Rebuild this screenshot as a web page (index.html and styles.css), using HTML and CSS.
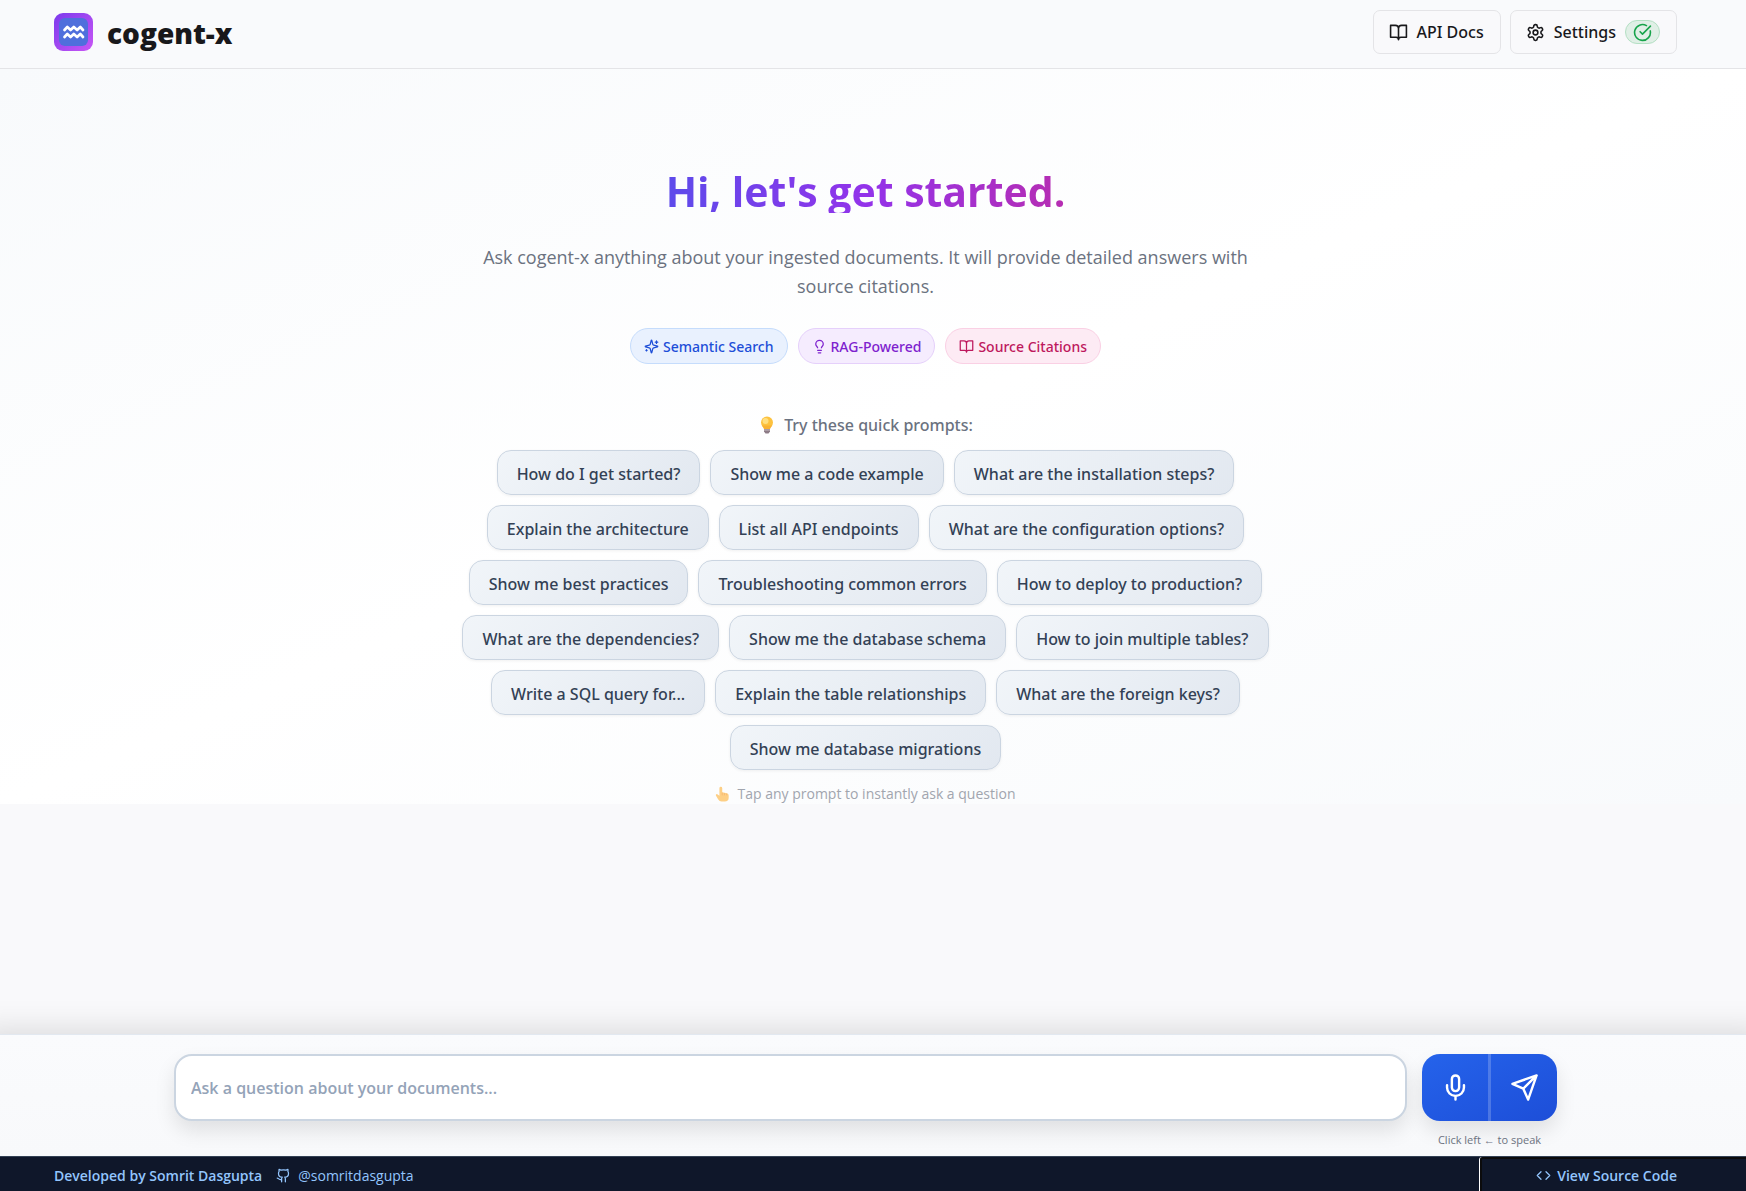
FILE: index.html
```html
<!DOCTYPE html>
<html lang="en">
<head>
<meta charset="utf-8">
<meta name="viewport" content="width=device-width, initial-scale=1">
<title>cogent-x</title>
<link rel="stylesheet" href="styles.css">
</head>
<body>
<svg class="sprite" aria-hidden="true">
  <symbol id="book" viewBox="0 0 24 24"><path d="M2 3h6a4 4 0 0 1 4 4v14a3 3 0 0 0-3-3H2zM22 3h-6a4 4 0 0 0-4 4v14a3 3 0 0 1 3-3h7z"/></symbol>
</svg>
<header class="header">
  <div class="brand">
    <svg class="logo" viewBox="0 0 39 38" aria-hidden="true">
      <defs><linearGradient id="logo-fill" x1="0" y1="0" x2="1" y2="1"><stop offset="0" stop-color="#7c3aed"/><stop offset="1" stop-color="#c956f5"/></linearGradient></defs>
      <rect width="39" height="38" rx="9" fill="url(#logo-fill)"/>
      <rect x="5" y="5" width="29" height="28" rx="6" fill="#4f6fdc"/>
      <path d="M10.500 17l2.800-3 3.300 3 3.200-3 3.300 3 3.200-3 2.700 3M10.500 24l2.800-3 3.300 3 3.200-3 3.300 3 3.200-3 2.700 3" fill="none" stroke="#fff" stroke-width="2.700" stroke-linecap="round" stroke-linejoin="round"/>
    </svg>
    <span class="brand-name">cogent-x</span>
  </div>
  <nav class="actions">
    <button class="action" type="button"><svg class="icon icon-md"><use href="#book"/></svg>API Docs</button>
    <button class="action" type="button">
      <svg class="icon icon-md" viewBox="0 0 24 24"><path d="M12.220 2h-.44a2 2 0 0 0-2 2v.18a2 2 0 0 1-1 1.730l-.43.25a2 2 0 0 1-2 0l-.15-.08a2 2 0 0 0-2.730.73l-.22.38a2 2 0 0 0 .73 2.730l.15.1a2 2 0 0 1 1 1.720v.51a2 2 0 0 1-1 1.740l-.15.09a2 2 0 0 0-.73 2.730l.22.38a2 2 0 0 0 2.730.73l.15-.08a2 2 0 0 1 2 0l.43.25a2 2 0 0 1 1 1.730V20a2 2 0 0 0 2 2h.44a2 2 0 0 0 2-2v-.18a2 2 0 0 1 1-1.730l.43-.25a2 2 0 0 1 2 0l.15.08a2 2 0 0 0 2.730-.73l.22-.39a2 2 0 0 0-.73-2.730l-.15-.08a2 2 0 0 1-1-1.740v-.5a2 2 0 0 1 1-1.740l.15-.09a2 2 0 0 0 .73-2.730l-.22-.38a2 2 0 0 0-2.730-.73l-.15.08a2 2 0 0 1-2 0l-.43-.25a2 2 0 0 1-1-1.730V4a2 2 0 0 0-2-2z"/><circle cx="12" cy="12" r="3"/></svg>Settings
      <span class="status"><svg class="icon icon-md" viewBox="0 0 24 24"><path d="M21.800 10A10 10 0 1 1 17 3.335M9 11l3 3L22 4"/></svg></span>
    </button>
  </nav>
</header>
<main class="main">
  <section class="hero">
    <div class="hero-inner">
      <h1 class="title">Hi, let's get started.</h1>
      <p class="lead">Ask cogent-x anything about your ingested documents. It will provide detailed answers with source citations.</p>
      <ul class="tags">
        <li class="tag tag-blue"><svg class="icon icon-sm" viewBox="0 0 24 24"><path d="M9.937 15.500A2 2 0 0 0 8.500 14.063l-6.135-1.582a.5.5 0 0 1 0-.962L8.500 9.936A2 2 0 0 0 9.937 8.500l1.582-6.135a.5.5 0 0 1 .963 0L14.063 8.500A2 2 0 0 0 15.500 9.937l6.135 1.581a.5.5 0 0 1 0 .964L15.500 14.063a2 2 0 0 0-1.437 1.437l-1.582 6.135a.5.5 0 0 1-.963 0zM20 3v4M22 5h-4M4 17v2M5 18H3"/></svg>Semantic Search</li>
        <li class="tag tag-purple"><svg class="icon icon-sm" viewBox="0 0 24 24"><path d="M15 14c.2-1 .7-1.700 1.500-2.500 1-.9 1.500-2.200 1.500-3.500A6 6 0 0 0 6 8c0 1 .2 2.200 1.500 3.500.7.7 1.300 1.500 1.500 2.500M9 18h6M10 22h4"/></svg>RAG-Powered</li>
        <li class="tag tag-pink"><svg class="icon icon-sm"><use href="#book"/></svg>Source Citations</li>
      </ul>
      <h2 class="prompts-title">
        <svg class="emoji" viewBox="0 0 18 18" aria-hidden="true"><path d="M6 12h6v3.500l-1.500 2h-3L6 15.500z" fill="#8d7b86"/><path d="M6 14h6" stroke="#c9bfc6" stroke-width="1"/><circle cx="9" cy="6.500" r="6" fill="#fdc23e"/><path d="M4 9.500h10l-2 3.500H6z" fill="#f9b233"/><circle cx="7.500" cy="5" r="3" fill="#ffdf80"/></svg>Try these quick prompts:</h2>
      <div class="prompts">
        <button class="prompt" type="button">How do I get started?</button>
        <button class="prompt" type="button">Show me a code example</button>
        <button class="prompt" type="button">What are the installation steps?</button>
        <button class="prompt" type="button">Explain the architecture</button>
        <button class="prompt" type="button">List all API endpoints</button>
        <button class="prompt" type="button">What are the configuration options?</button>
        <button class="prompt" type="button">Show me best practices</button>
        <button class="prompt" type="button">Troubleshooting common errors</button>
        <button class="prompt" type="button">How to deploy to production?</button>
        <button class="prompt" type="button">What are the dependencies?</button>
        <button class="prompt" type="button">Show me the database schema</button>
        <button class="prompt" type="button">How to join multiple tables?</button>
        <button class="prompt" type="button">Write a SQL query for...</button>
        <button class="prompt" type="button">Explain the table relationships</button>
        <button class="prompt" type="button">What are the foreign keys?</button>
        <button class="prompt" type="button">Show me database migrations</button>
      </div>
      <p class="hint">
        <svg class="emoji-sm" viewBox="1 0 17 18" aria-hidden="true"><path d="M6 2.500a1.600 1.600 0 0 1 3.200 0V7l5.300 1.200q2 .6 2 2.500v2.500q0 4.300-4.500 4.300H8.500q-2.500 0-4-2.500L2 10.800Q1.400 9 3.200 9L6 11z" fill="#fdcf85"/><path d="M9.200 7.500v3M11.700 8v2.500M14.200 8.500v2" stroke="#f2ae68" stroke-width=".7"/></svg>Tap any prompt to instantly ask a question</p>
    </div>
  </section>
</main>
<form class="composer">
  <div class="composer-inner">
    <input class="question" type="text" aria-label="Question" placeholder="Ask a question about your documents...">
    <div class="send-column">
      <div class="send-group">
        <button class="send" type="button" aria-label="Speak"><svg class="icon icon-lg" viewBox="0 0 24 24"><path d="M12 2a3 3 0 0 0-3 3v7a3 3 0 0 0 6 0V5a3 3 0 0 0-3-3zM19 10v2a7 7 0 0 1-14 0v-2M12 19v3"/></svg></button>
        <button class="send" type="button" aria-label="Send"><svg class="icon icon-lg" viewBox="0 0 24 24"><path d="M22 2l-7 20-4-9-9-4zM22 2L11 13"/></svg></button>
      </div>
      <span class="send-note">Click left ← to speak</span>
    </div>
  </div>
</form>
<footer class="footer">
  <div class="credits">
    <strong>Developed by Somrit Dasgupta</strong>
    <a class="handle" href="#"><svg class="icon icon-sm" viewBox="0 0 24 24"><path d="M15 22v-4a4.800 4.800 0 0 0-1-3.500c3 0 6-2 6-5.500.08-1.250-.27-2.480-1-3.500.28-1.150.28-2.350 0-3.500 0 0-1 0-3 1.500-2.640-.5-5.360-.5-8 0C6 2 5 2 5 2c-.3 1.150-.3 2.350 0 3.500A5.403 5.403 0 0 0 4 9c0 3.500 3 5.500 6 5.500-.39.49-.68 1.050-.85 1.650-.17.6-.22 1.230-.15 1.850v4M9 18c-4.510 2-5-2-7-2"/></svg>@somritdasgupta</a>
  </div>
  <a class="source" href="#"><svg class="icon icon-sm" viewBox="0 0 24 24"><path d="M16 18l6-6-6-6M8 6l-6 6 6 6"/></svg>View Source Code</a>
</footer>
</body>
</html>
```
FILE: styles.css
```css
* { box-sizing: border-box; }

body {
  margin: 0;
  min-height: 100vh;
  display: flex;
  flex-direction: column;
  background: #f9f9fb;
  color: #18181b;
  font-family: "Open Sans", "Noto Sans", sans-serif;
  font-size: 16px;
}

button, input { font: inherit; color: inherit; }
button { cursor: pointer; }
h1, h2, p, ul { margin: 0; padding: 0; }
a { color: inherit; text-decoration: none; }

.sprite { position: absolute; width: 0; height: 0; }

.icon {
  flex: none;
  fill: none;
  stroke: currentColor;
  stroke-width: 2;
  stroke-linecap: round;
  stroke-linejoin: round;
}
.icon-sm { width: 15px; height: 15px; }
.icon-md { width: 19px; height: 19px; }
.icon-lg { width: 29px; height: 29px; }
.emoji { width: 18px; height: 18px; flex: none; }
.emoji-sm { width: 15px; height: 16px; flex: none; }

/* Header */
.header {
  display: flex;
  justify-content: space-between;
  align-items: center;
  height: 69px;
  padding: 0 69px 4px 54px;
  background: #f9fafc;
  border-bottom: 1px solid #e4e4e7;
}
.brand { display: flex; align-items: center; gap: 14px; }
.logo { width: 39px; height: 38px; }
.brand-name { padding-top: 2px; font-size: 28px; font-weight: 800; line-height: 36px; }
.actions { display: flex; gap: 9px; }
.action {
  display: flex;
  align-items: center;
  gap: 9px;
  height: 44px;
  padding: 0 16px 0 15px;
  border: 1px solid #e4e4e7;
  border-radius: 7px;
  background: #f9f9fb;
  font-family: "Noto Sans", sans-serif;
  font-weight: 500;
}
.status {
  display: flex;
  justify-content: center;
  align-items: center;
  width: 35px;
  height: 24px;
  border: 1px solid #b4e0c4;
  border-radius: 12px;
  background: #e0efe6;
  color: #16a34a;
}

/* Hero */
.main { flex: 1; }
.hero {
  padding: 98px 15px 0 0;
  background: linear-gradient(to bottom right, #f8fafc, #fff, #f8fafc);
}
.hero-inner { max-width: 810px; margin: 0 auto; text-align: center; }
.title {
  padding-top: 2px;
  font-size: 41px;
  line-height: 44px;
  font-weight: 700;
  background: linear-gradient(to right, #2563eb, #9333ea, #db2777);
  -webkit-background-clip: text;
  background-clip: text;
  color: transparent;
}
.lead {
  padding: 0 14px;
  margin-top: 30px;
  color: #6b7280;
  font-size: 18px;
  line-height: 29px;
}
.tags {
  display: flex;
  justify-content: center;
  gap: 10px;
  margin-top: 27px;
  list-style: none;
}
.tag {
  display: flex;
  align-items: center;
  gap: 4px;
  height: 36px;
  padding: 0 13px;
  border: 1px solid;
  border-radius: 18px;
  font-family: "Noto Sans", sans-serif;
  font-size: 14px;
  font-weight: 500;
}
.tag-blue { background: #e9f1fe; border-color: #c5dcfc; color: #1d4ed8; }
.tag-purple { background: #f5ecfe; border-color: #e5d0fb; color: #7e22ce; }
.tag-pink { background: #fdebf4; border-color: #fad0e4; color: #be185d; }
.prompts-title {
  display: flex;
  justify-content: center;
  align-items: center;
  gap: 8px;
  margin: 48px 0 12px;
  color: #6b7280;
  font-family: "Noto Sans", sans-serif;
  font-size: 16px;
  line-height: 26px;
  font-weight: 500;
}
.prompts { display: flex; flex-wrap: wrap; justify-content: center; gap: 10px; }
.prompt {
  height: 45px;
  padding: 2px 19px 0;
  border: 1px solid #cbd5e1;
  border-radius: 14px;
  background: linear-gradient(135deg, #f1f5f9, #e2e8f0);
  box-shadow: 0 1px 3px rgba(0, 0, 0, .06);
  color: #334155;
  font-family: "Noto Sans", sans-serif;
  font-weight: 500;
}
.hint {
  display: flex;
  justify-content: center;
  align-items: center;
  gap: 7px;
  margin-top: 14px;
  color: #a1a5ae;
  font-size: 14px;
  line-height: 20px;
}

/* Composer */
.composer {
  padding: 19px 15px 8px 0;
  border-top: 1px solid #e2e8f0;
  background: linear-gradient(#fafbfd, #f8f9fb);
  box-shadow: 0 16px 30px 20px rgba(0, 0, 0, .13);
}
.composer-inner {
  display: flex;
  align-items: flex-start;
  gap: 15px;
  max-width: 1383px;
  margin: 0 auto;
}
.question {
  flex: 1;
  min-width: 0;
  height: 67px;
  padding: 0 15px;
  border: 2px solid #cbd5e1;
  border-radius: 18px;
  background: #fff;
  box-shadow: 0 10px 20px rgba(0, 0, 0, .1);
  font-weight: 600;
}
.question::placeholder { color: #94a3b8; opacity: 1; }
.send-column { width: 135px; text-align: center; }
.send-group {
  display: flex;
  height: 67px;
  border-radius: 18px;
  overflow: hidden;
  background: linear-gradient(to bottom right, #2563eb, #1d4ed8);
  box-shadow: 0 10px 20px rgba(0, 0, 0, .1);
}
.send {
  flex: 1;
  display: flex;
  justify-content: center;
  align-items: center;
  padding: 0;
  border: 0;
  background: none;
  color: #fff;
}
.send + .send { border-left: 3px solid rgba(255, 255, 255, .2); }
.send-note {
  display: block;
  margin-top: 11px;
  color: #6b7280;
  font-size: 11px;
  line-height: 16px;
}

/* Footer */
.footer {
  display: flex;
  justify-content: space-between;
  height: 35px;
  padding-left: 54px;
  border-top: 1px solid #334155;
  background: #0f172a;
  color: #93c5fd;
  font-size: 14px;
}
.credits, .handle, .source { display: flex; align-items: center; }
.credits { gap: 14px; padding-top: 2px; }
.credits strong { font-weight: 600; }
.handle { gap: 7px; }
.source {
  gap: 6px;
  padding: 0 69px 0 54px;
  border: solid #0b0b0c;
  border-width: 2px 0 0 2px;
  border-radius: 3px 0 0 0;
  box-shadow: -1px 0 #fff;
  font-weight: 600;
}
```
